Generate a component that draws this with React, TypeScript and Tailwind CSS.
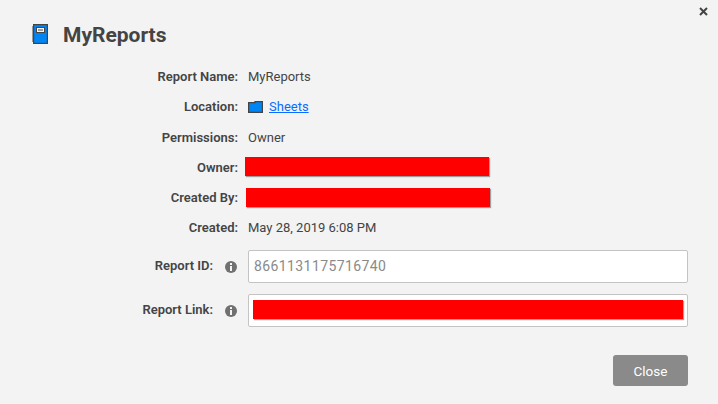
import React from 'react';

const Row: React.FC<{ label: string; children?: React.ReactNode }> = ({ label, children }) => (
  <div className="flex items-center h-[30.3px]">
    <div className="w-[238px] text-right font-semibold text-[#444444]">{label}</div>
    <div className="ml-[10px] flex-1 flex items-center text-[#444444]">{children}</div>
  </div>
);

const Redacted: React.FC<{ className: string }> = ({ className }) => (
  <div className={`h-[19px] bg-[#ff0000] shadow-[1px_1px_1px_rgba(0,0,0,0.35)] ${className}`} />
);

const InfoIcon = () => (
  <svg width="12" height="12" viewBox="0 0 12 12" className="block">
    <circle cx="6" cy="6" r="6" fill="#707070" />
    <rect x="5" y="2" width="2" height="2" fill="#f3f3f3" />
    <rect x="5" y="5" width="2" height="5" fill="#f3f3f3" />
  </svg>
);

const InputRow: React.FC<{ label: string; children?: React.ReactNode }> = ({ label, children }) => (
  <div className="flex items-center">
    <div className="w-[213px] text-right font-semibold text-[#444444] -translate-y-px">{label}</div>
    <div className="ml-[12px] w-[23px]">
      <InfoIcon />
    </div>
    <div className="w-[440px] h-[33px] bg-white border border-[#c4c4c4] rounded-[2px] flex items-center pl-[4px]">
      {children}
    </div>
  </div>
);

export default function App() {
  return (
    <div className="w-[718px] h-[404px] bg-[#f3f3f3] overflow-hidden relative font-['Roboto',sans-serif] text-[13px]">
      {/* Close x */}
      <svg width="9" height="9" viewBox="0 0 9 9" className="absolute top-[7px] right-[10px]">
        <path d="M1 1 L8 8 M8 1 L1 8" stroke="#444444" strokeWidth="2" />
      </svg>

      {/* Header */}
      <div className="flex items-center pl-[32px] pt-[7px] h-[61px]">
        <svg width="16" height="20" viewBox="0 0 16 20" className="block">
          <rect x="1.6" y="0.6" width="13.8" height="18.8" fill="#0085f5" stroke="#444444" strokeWidth="1.2" />
          <rect x="4.5" y="3.5" width="8" height="5" fill="#f7f7f7" stroke="#444444" />
          <rect x="6" y="5.5" width="5" height="1" fill="#444444" />
          <path d="M0 3h1M0 5h1M0 7h1M0 9h1M0 11h1M0 13h1M0 15h1M0 17h1" stroke="#444444" strokeWidth="1" />
        </svg>
        <h1 className="ml-[15px] mt-[2px] text-[21px] font-bold leading-none text-[#444444]">MyReports</h1>
      </div>

      {/* Details */}
      <div className="pt-[0.55px]">
        <Row label="Report Name:">MyReports</Row>
        <Row label="Location:">
          <svg width="15" height="12" viewBox="0 0 15 12" className="block">
            <path d="M0.6 1.6h6.4v-1h7.4v10.8h-13.8z" fill="#0085f5" stroke="#444444" strokeWidth="1.2" />
          </svg>
          <a href="#" className="ml-[6px] text-[#0a6cff] underline">Sheets</a>
        </Row>
        <Row label="Permissions:">Owner</Row>
        <Row label="Owner:" />
        <Row label="Created By:" />
        <Row label="Created:">May 28, 2019 6:08 PM</Row>
      </div>

      {/* Ids */}
      <div className="mt-[7.15px] flex flex-col gap-[11px]">
        <InputRow label="Report ID:">
          <span className="ml-[1px] text-[#8a8a8a] text-[14px] tracking-[0.4px]">8661131175716740</span>
        </InputRow>
        <InputRow label="Report Link:" />
      </div>

      {/* Footer */}
      <div className="flex justify-end pr-[30px] mt-[28px]">
        <button className="w-[75px] h-[31px] bg-[#8a8a8a] rounded-[3px] text-white text-[13.5px]">Close</button>
      </div>

      {/* Redaction bars sit over the original values */}
      <Redacted className="absolute left-[245px] top-[157px] w-[244px]" />
      <Redacted className="absolute left-[246px] top-[188px] w-[244px]" />
      <Redacted className="absolute left-[253px] top-[300px] w-[430px]" />
    </div>
  );
}
